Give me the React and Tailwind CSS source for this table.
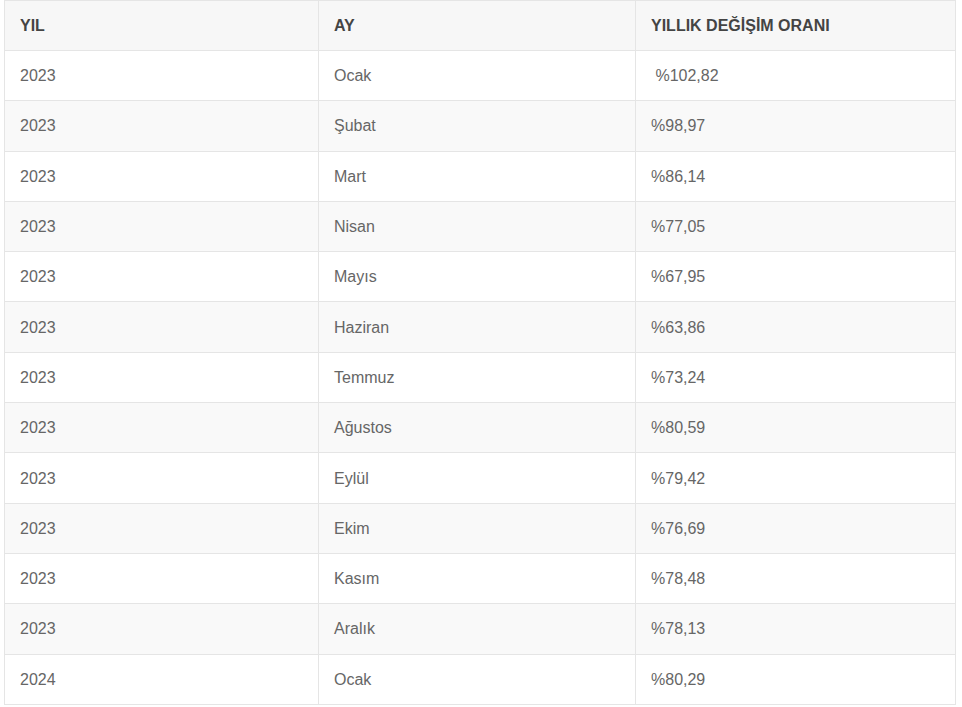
import React from "react";

const rows = [
  ["2023", "Ocak", "\u00a0%102,82"],
  ["2023", "Şubat", "%98,97"],
  ["2023", "Mart", "%86,14"],
  ["2023", "Nisan", "%77,05"],
  ["2023", "Mayıs", "%67,95"],
  ["2023", "Haziran", "%63,86"],
  ["2023", "Temmuz", "%73,24"],
  ["2023", "Ağustos", "%80,59"],
  ["2023", "Eylül", "%79,42"],
  ["2023", "Ekim", "%76,69"],
  ["2023", "Kasım", "%78,48"],
  ["2023", "Aralık", "%78,13"],
  ["2024", "Ocak", "%80,29"],
];

export default function App() {
  return (
    <div className="bg-white w-[962px] h-[707px] pl-[4px] font-['Liberation_Sans',Arial,sans-serif]">
      <table className="border-collapse w-[951px] table-fixed text-[16px]">
        <colgroup>
          <col className="w-[314px]" />
          <col className="w-[317px]" />
          <col className="w-[320px]" />
        </colgroup>
        <thead>
          <tr className="bg-[#f7f7f7] h-[50px]">
            {["YIL", "AY", "YILLIK DEĞİŞİM ORANI"].map((h) => (
              <th
                key={h}
                className="border border-[#e5e5e5] text-left font-bold text-[#444] px-[15px] align-middle"
              >
                {h}
              </th>
            ))}
          </tr>
        </thead>
        <tbody>
          {rows.map((r, i) => (
            <tr
              key={i}
              className={(i % 2 === 1 ? "bg-[#f9f9f9]" : "bg-white") + " h-[50.3px]"}
            >
              {r.map((c, j) => (
                <td
                  key={j}
                  className="border border-[#e5e5e5] text-[#666] px-[15px] pt-[1px] align-middle"
                >
                  {c}
                </td>
              ))}
            </tr>
          ))}
        </tbody>
      </table>
    </div>
  );
}
